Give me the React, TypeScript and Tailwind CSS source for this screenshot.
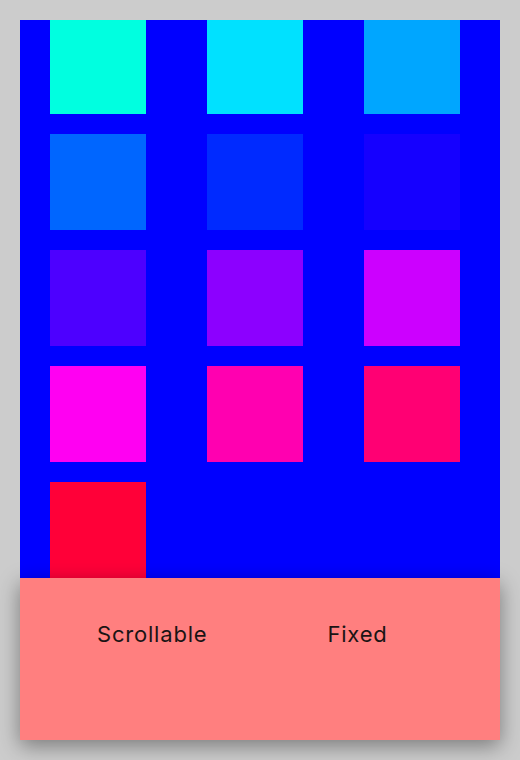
import React from "react";

const colors = [
  "#00ffe0",
  "#00e1ff",
  "#00a6ff",
  "#0066ff",
  "#002aff",
  "#1500ff",
  "#4d00ff",
  "#8c00ff",
  "#cc00ff",
  "#ff00f2",
  "#ff00b0",
  "#ff0073",
  "#ff0038",
];

export default function App() {
  return (
    <div className="w-[520px] h-[760px] bg-[#cccccc] p-[20px]">
      <div className="w-[480px] h-[720px] flex flex-col">
        <div className="flex-1 overflow-hidden bg-[#0000ff]">
          <div className="grid grid-cols-[repeat(3,96px)] gap-x-[61px] gap-y-[20px] pl-[30px] mt-[-2px]">
            {colors.map((c, i) => (
              <div key={i} className="w-[96px] h-[96px]" style={{ backgroundColor: c }} />
            ))}
          </div>
        </div>
        <div className="relative z-10 h-[162px] bg-[#ff7f7f] shadow-[0_6px_20px_rgba(0,0,0,0.4)] flex items-start pl-[77px] pt-[40px] gap-[120px] font-['Inter',sans-serif] text-[22px] leading-[33px] tracking-[0.8px] text-[#1a1414]">
          <span>Scrollable</span>
          <span>Fixed</span>
        </div>
      </div>
    </div>
  );
}
